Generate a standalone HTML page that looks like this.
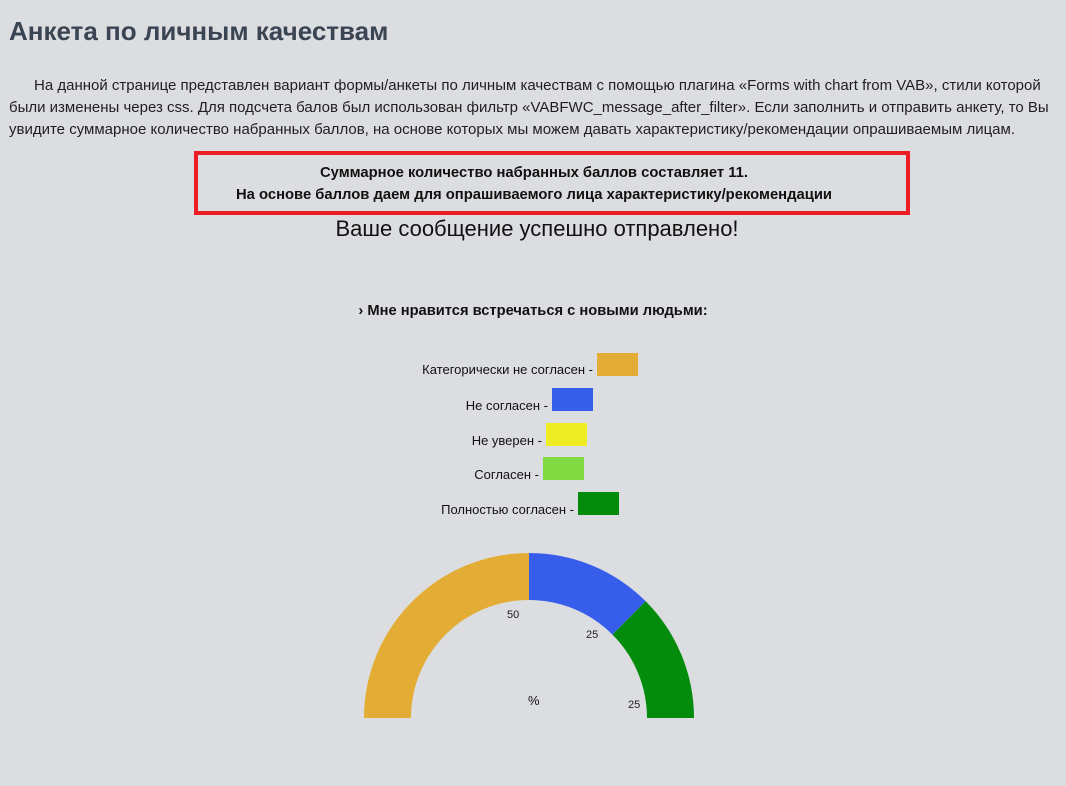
<!DOCTYPE html>
<html><head><meta charset="utf-8">
<style>
html,body{margin:0;padding:0;}
body{width:1066px;height:786px;background:#dcdde0;position:relative;overflow:hidden;font-family:"Liberation Sans","DejaVu Sans",sans-serif;color:#1a1a1a;}
.abs{position:absolute;white-space:nowrap;}
h1{position:absolute;left:9px;top:16px;margin:0;font-size:26px;font-weight:bold;color:#3a4453;}
.p{position:absolute;left:9px;top:75px;width:1060px;font-size:15px;line-height:22px;color:#1f1f1f;white-space:nowrap;}
.box{position:absolute;left:194px;top:151px;width:672px;padding-right:36px;height:56px;border:4px solid #ee1c25;text-align:center;font-weight:bold;font-size:14.8px;line-height:22px;color:#111;}
.leg{position:absolute;font-size:13px;color:#111;text-align:right;}
.sw{position:absolute;width:41px;height:23px;}
</style></head><body>
<h1>Анкета по личным качествам</h1>
<div class="p">&nbsp;&nbsp;&nbsp;&nbsp;&nbsp;&nbsp;На данной странице представлен вариант формы/анкеты по личным качествам с помощью плагина «Forms with chart from VAB», стили которой<br>были изменены через css. Для подсчета балов был использован фильтр «VABFWC_message_after_filter». Если заполнить и отправить анкету, то Вы<br>увидите суммарное количество набранных баллов, на основе которых мы можем давать характеристику/рекомендации опрашиваемым лицам.</div>
<div class="box"><div style="margin-top:7px">Суммарное количество набранных баллов составляет 11.</div><div>На основе баллов даем для опрашиваемого лица характеристику/рекомендации</div></div>
<div class="abs" style="left:0;width:1074px;text-align:center;top:216px;font-size:22px;color:#111;">Ваше сообщение успешно отправлено!</div>
<div class="abs" style="left:0;width:1066px;text-align:center;top:303px;font-size:14.7px;font-weight:bold;color:#111;">› Мне нравится встречаться с новыми людьми:</div>

<div class="leg abs" style="right:473px;top:362px;">Категорически не согласен -</div><div class="sw" style="left:597px;top:353px;background:#e3ad35"></div>
<div class="leg abs" style="right:518px;top:398px;">Не согласен -</div><div class="sw" style="left:552px;top:388px;background:#375eeb"></div>
<div class="leg abs" style="right:524px;top:433px;">Не уверен -</div><div class="sw" style="left:546px;top:423px;background:#eeec22"></div>
<div class="leg abs" style="right:527px;top:467px;">Согласен -</div><div class="sw" style="left:543px;top:457px;background:#82d941"></div>
<div class="leg abs" style="right:492px;top:502px;">Полностью согласен -</div><div class="sw" style="left:578px;top:492px;background:#038c0c"></div>

<svg class="abs" style="left:0;top:0" width="1066" height="786">
<path d="M364 718 A165 165 0 0 1 529 553 L529 600 A118 118 0 0 0 411 718 Z" fill="#e3ad35"/>
<path d="M529 553 A165 165 0 0 1 645.7 601.3 L612.4 634.6 A118 118 0 0 0 529 600 Z" fill="#375eeb"/>
<path d="M645.7 601.3 A165 165 0 0 1 694 718 L647 718 A118 118 0 0 0 612.4 634.6 Z" fill="#038c0c"/>
<g font-family="Liberation Sans, sans-serif" font-size="11" fill="#222">
<text x="507" y="618">50</text>
<text x="586" y="638">25</text>
<text x="628" y="708">25</text>
<text x="528" y="705" font-size="13" fill="#111">%</text>
</g>
</svg>
</body></html>
